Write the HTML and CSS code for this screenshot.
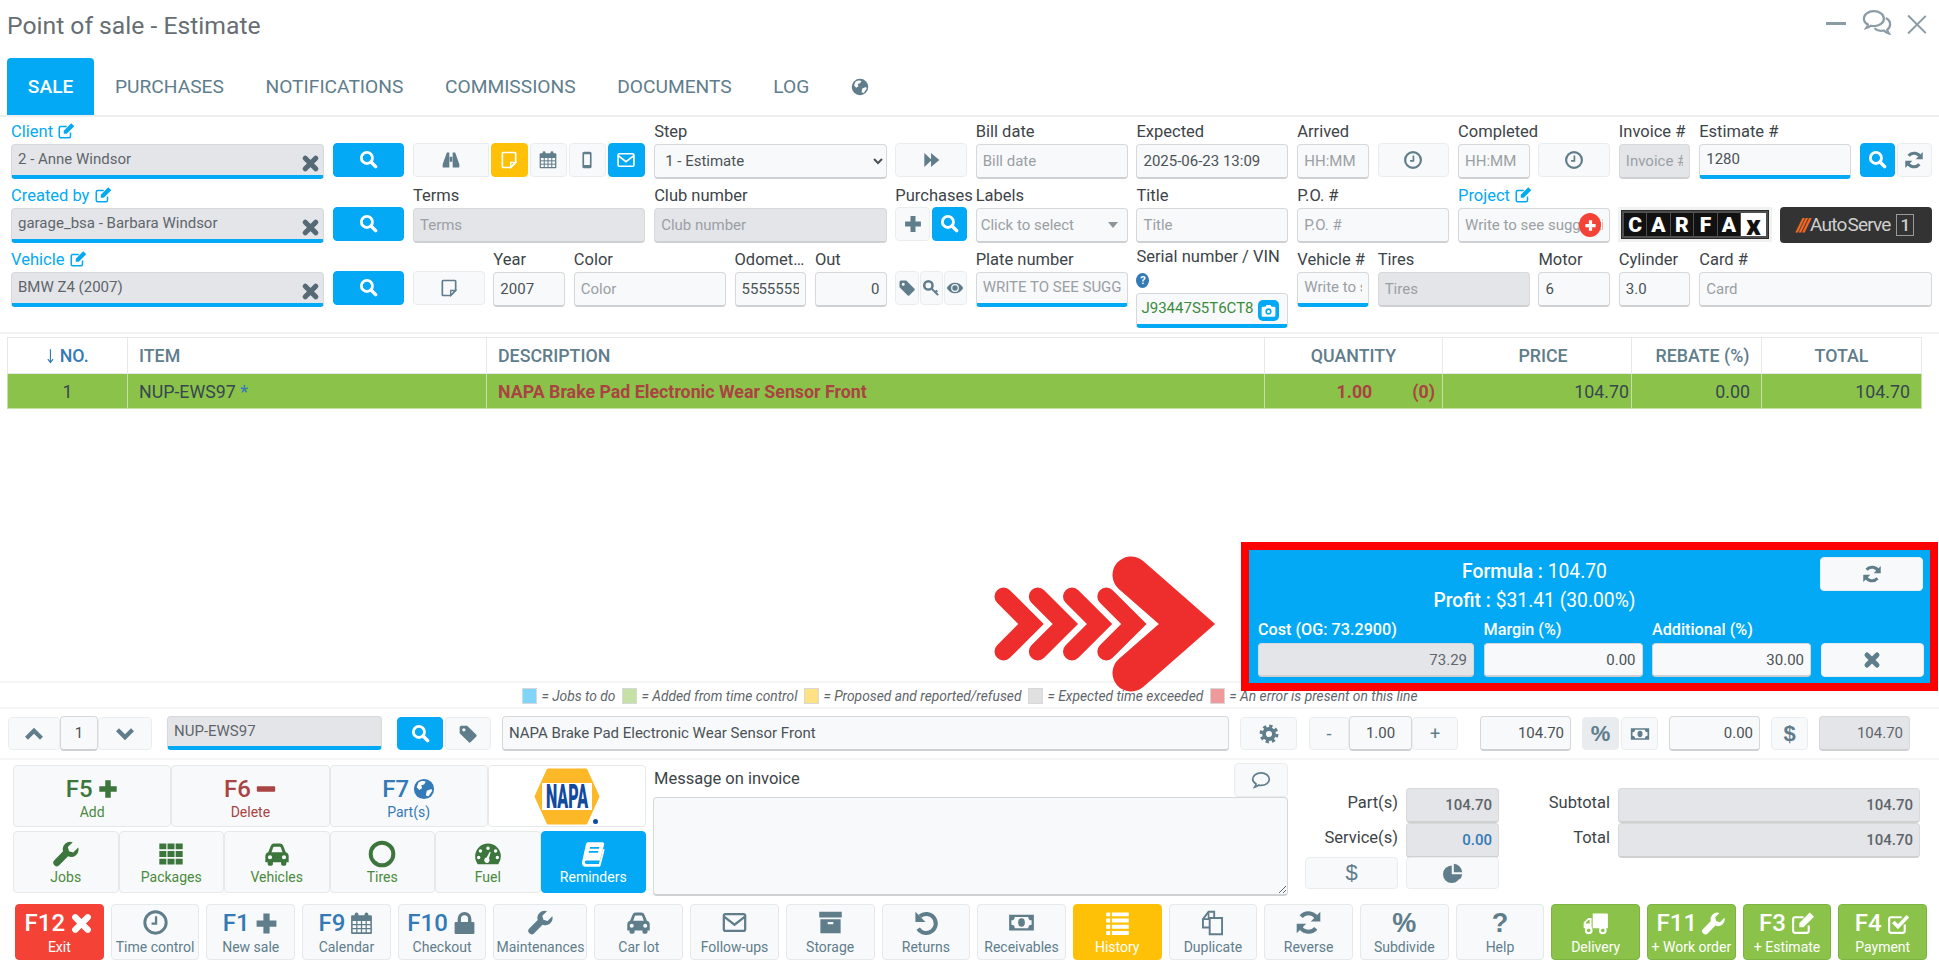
FILE: index.html
```html
<!doctype html>
<html lang="en">
<head>
  <meta charset="utf-8">
  <title>Point of sale - Estimate</title>
  <link rel="stylesheet" href="styles.css">
</head>
<body>
<svg class="sprite" xmlns="http://www.w3.org/2000/svg">
  <symbol id="search" viewBox="0 0 24 24"><circle cx="10" cy="10" r="7" fill="none" stroke="currentColor" stroke-width="3.6"/><path d="M15.5 15.5l5.5 5.5" fill="none" stroke="currentColor" stroke-width="4.4" stroke-linecap="round"/></symbol>
  <symbol id="times" viewBox="0 0 24 24"><path d="M6 6l12 12M18 6L6 18" fill="none" stroke="currentColor" stroke-width="6" stroke-linecap="round"/></symbol>
  <symbol id="edit" viewBox="0 0 24 24"><path d="M18 14v5a2 2 0 0 1-2 2H5a2 2 0 0 1-2-2V8a2 2 0 0 1 2-2h8" fill="none" stroke="currentColor" stroke-width="2"/><path d="M9 15.5v-4L19 1.5l4 4-10 10z"/></symbol>
  <symbol id="binoculars" viewBox="0 0 24 24"><path d="M10 3H7L2 17v3a1 1 0 0 0 1 1h7zM14 3h3l5 14v3a1 1 0 0 1-1 1h-7zM10.5 8h3v6h-3z"/></symbol>
  <symbol id="note" viewBox="0 0 24 24"><path d="M5 3h14a1 1 0 0 1 1 1v11l-6 6H5a1 1 0 0 1-1-1V4a1 1 0 0 1 1-1z" fill="none" stroke="currentColor" stroke-width="2"/><path d="M20 15h-6v6z" fill="none" stroke="currentColor" stroke-width="1.6"/></symbol>
  <symbol id="calendar" viewBox="0 0 24 24"><path fill-rule="evenodd" d="M3 4h18a1 1 0 0 1 1 1v16a1 1 0 0 1-1 1H3a1 1 0 0 1-1-1V5a1 1 0 0 1 1-1zM3.500 9.500v11h17v-11z"/><path d="M3 13h18M3 17h18M7.500 9v12M12 9v12M16.500 9v12" stroke="currentColor" stroke-width="1.200"/><rect x="5.500" y="1.500" width="3.500" height="6" rx="1.700"/><rect x="15" y="1.500" width="3.500" height="6" rx="1.700"/></symbol>
  <symbol id="mobile" viewBox="0 0 24 24"><path fill-rule="evenodd" d="M8.500 2h7a2 2 0 0 1 2 2v16a2 2 0 0 1-2 2h-7a2 2 0 0 1-2-2V4a2 2 0 0 1 2-2zM8.500 5v13h7V5z"/></symbol>
  <symbol id="envelope" viewBox="0 0 24 24"><rect x="2.500" y="4.500" width="19" height="15" rx="1.500" fill="none" stroke="currentColor" stroke-width="2"/><path d="M3 7l9 7 9-7" fill="none" stroke="currentColor" stroke-width="2"/></symbol>
  <symbol id="forward" viewBox="0 0 24 24"><path d="M4 3.500l8 7.500V3.500l10 8.500-10 8.500V13l-8 7.500z"/></symbol>
  <symbol id="clock" viewBox="0 0 24 24"><circle cx="12" cy="12" r="9.500" fill="none" stroke="currentColor" stroke-width="2.600"/><path d="M12.500 6.500v6.500H8.500" fill="none" stroke="currentColor" stroke-width="2"/></symbol>
  <symbol id="plus" viewBox="0 0 24 24"><path d="M9 2.500h6v6.500h6.500v6H15v6.500H9V15H2.500V9H9z"/></symbol>
  <symbol id="minus" viewBox="0 0 24 24"><rect x="2" y="9" width="20" height="6" rx="1"/></symbol>
  <symbol id="tag" viewBox="0 0 24 24"><path fill-rule="evenodd" d="M4 2h7l11 11a1.500 1.500 0 0 1 0 2l-7 7a1.500 1.500 0 0 1-2 0L2 11V4a2 2 0 0 1 2-2zM7 5a2 2 0 1 0 0 4 2 2 0 0 0 0-4z"/></symbol>
  <symbol id="key" viewBox="0 0 24 24"><circle cx="8.500" cy="8.500" r="5.500" fill="none" stroke="currentColor" stroke-width="3.400"/><path d="M12.500 12.500l9 9M17.500 17.500l3-2" fill="none" stroke="currentColor" stroke-width="2.800"/></symbol>
  <symbol id="eye" viewBox="0 0 24 24"><path fill-rule="evenodd" d="M1 12c2.500-4.500 6.500-7 11-7s8.500 2.500 11 7c-2.500 4.500-6.500 7-11 7S3.500 16.500 1 12zM12 6.800a5.200 5.200 0 1 0 0 10.400 5.200 5.200 0 0 0 0-10.400z"/><circle cx="12" cy="12" r="3.600"/></symbol>
  <symbol id="camera" viewBox="0 0 24 24"><path fill-rule="evenodd" d="M3 6h4l2-3h6l2 3h4a2 2 0 0 1 2 2v12a2 2 0 0 1-2 2H3a2 2 0 0 1-2-2V8a2 2 0 0 1 2-2zM12 8.500a5 5 0 1 0 0 10 5 5 0 0 0 0-10zM12 11a2.500 2.500 0 1 1 0 5 2.500 2.500 0 0 1 0-5z"/></symbol>
  <symbol id="refresh" viewBox="0 0 24 24"><path d="M20 9.500A8.500 8.500 0 0 0 5.500 6.800M4 14.500a8.500 8.500 0 0 0 14.500 2.700" fill="none" stroke="currentColor" stroke-width="3.600"/><path d="M22.500 2.500v8.500H14zM1.500 21.500V13H10z"/></symbol>
  <symbol id="globe" viewBox="0 0 24 24"><circle cx="12" cy="12" r="11"/><path d="M6 5c3-2 6-2 8-1l-2 3-3 1 1 3-3 2-3-3zM15 14l5-2 1 2-4 6-3-1z" fill="#fff"/></symbol>
  <symbol id="cog" viewBox="0 0 24 24"><circle cx="12" cy="12" r="6" fill="none" stroke="currentColor" stroke-width="4.600"/><circle cx="12" cy="12" r="9.500" fill="none" stroke="currentColor" stroke-width="3.600" stroke-dasharray="3.900 3.560"/></symbol>
  <symbol id="money" viewBox="0 0 24 24"><path fill-rule="evenodd" d="M1 5h22v14H1zM6 7a3 3 0 0 1-3 3v4a3 3 0 0 1 3 3h12a3 3 0 0 1 3-3v-4a3 3 0 0 1-3-3z"/><ellipse cx="12" cy="12" rx="3" ry="3.800"/></symbol>
  <symbol id="wrench" viewBox="0 0 24 24"><path d="M22.500 6.500l-4.300 4.200-3.600-1.100-1-3.600L17.800 2a6.300 6.300 0 0 0-8.300 7.700L2 17.300a3 3 0 0 0 4.400 4.200l7.400-7.600a6.300 6.300 0 0 0 8.700-7.400z"/></symbol>
  <symbol id="th" viewBox="0 0 24 24"><path d="M2 3h6v5H2zM9 3h6v5H9zM16 3h6v5h-6zM2 9.500h6v5H2zM9 9.500h6v5H9zM16 9.500h6v5h-6zM2 16h6v5H2zM9 16h6v5H9zM16 16h6v5h-6z"/></symbol>
  <symbol id="car" viewBox="0 0 24 24"><path fill-rule="evenodd" d="M4.500 10.500L6.700 5a3 3 0 0 1 2.800-2h5a3 3 0 0 1 2.800 2l2.200 5.500a3.500 3.500 0 0 1 2.500 3.300V19h-2v1.500a1.500 1.500 0 0 1-1.500 1.500h-1.500a1.500 1.500 0 0 1-1.500-1.500V19H8.500v1.500A1.500 1.500 0 0 1 7 22H5.500A1.500 1.500 0 0 1 4 20.500V19H2v-5.200a3.500 3.500 0 0 1 2.500-3.300zM7.300 10.500h9.400L15.300 6.400a1 1 0 0 0-.9-.6H9.600a1 1 0 0 0-.9.600zM6 13a1.800 1.800 0 1 0 0 3.600A1.800 1.800 0 0 0 6 13zM18 13a1.800 1.800 0 1 0 0 3.600 1.800 1.800 0 0 0 0-3.600z"/></symbol>
  <symbol id="ring" viewBox="0 0 24 24"><circle cx="12" cy="12" r="9.700" fill="none" stroke="currentColor" stroke-width="3.400"/></symbol>
  <symbol id="dashboard" viewBox="0 0 24 24"><path fill-rule="evenodd" d="M12 3A11 11 0 0 0 1 14c0 2.500.8 4.800 2.200 6.700h17.600A11 11 0 0 0 23 14 11 11 0 0 0 12 3zM12 5.500a1.500 1.500 0 1 1 0 3 1.500 1.500 0 0 1 0-3zM5.500 8a1.500 1.500 0 1 1 0 3 1.500 1.500 0 0 1 0-3zM18.500 8a1.500 1.500 0 1 1 0 3 1.500 1.500 0 0 1 0-3zM4 13.500a1.500 1.500 0 1 1 0 3 1.500 1.500 0 0 1 0-3zM20 13.500a1.500 1.500 0 1 1 0 3 1.500 1.500 0 0 1 0-3zM13.500 10l-2.700 5.100a2.300 2.300 0 1 0 2 .8l1.500-5.600z"/></symbol>
  <symbol id="book" viewBox="0 0 24 24"><path fill-rule="evenodd" d="M8 2h12a1.500 1.500 0 0 1 1.500 2L18 17.500H6.500a1.500 1.500 0 0 0-.2 3H17l3.500-13 1.500.8-3.500 13.500a1.500 1.500 0 0 1-1.400 1.200H5.500a3.500 3.500 0 0 1-3-3.500c0-.6.100-1 .3-1.500L6 3.500A2 2 0 0 1 8 2zM9.500 6l-.4 1.500h8l.4-1.500zM8.600 9.500l-.4 1.500h8l.4-1.500z"/></symbol>
  <symbol id="archive" viewBox="0 0 24 24"><path fill-rule="evenodd" d="M2 2.500h20v5H2zM3 9h18v12.500H3zM9.500 11.500v2h5v-2z"/></symbol>
  <symbol id="undo" viewBox="0 0 24 24"><path d="M7 6.500a8.500 8.500 0 1 1-1.500 11" fill="none" stroke="currentColor" stroke-width="3.600"/><path d="M3 2.500v9h9z"/></symbol>
  <symbol id="list" viewBox="0 0 24 24"><path d="M2 3h3.500v3.500H2zM7 3h15v3.500H7zM2 8.500h3.500V12H2zM7 8.500h15V12H7zM2 14h3.500v3.500H2zM7 14h15v3.500H7zM2 19.500h3.500V23H2zM7 19.500h15V23H7z"/></symbol>
  <symbol id="files" viewBox="0 0 24 24"><path d="M9.500 16.500H3.500V9l5-6.500h5v5" fill="none" stroke="currentColor" stroke-width="1.700"/><path d="M9.500 8h11v14.500h-11z" fill="none" stroke="currentColor" stroke-width="1.700"/><path d="M8.500 3v6H3.500" fill="none" stroke="currentColor" stroke-width="1.400"/></symbol>
  <symbol id="truck" viewBox="0 0 24 24"><path fill-rule="evenodd" d="M9.500 4H22a1 1 0 0 1 1 1v12H9.500zM8.500 8v9H1.500v-5l4-4zM6.800 9.700H5.700L3.500 12v.8h3.300z"/><circle cx="6" cy="19" r="2.500" fill="none" stroke="currentColor" stroke-width="1.800"/><circle cx="18.500" cy="19" r="2.500" fill="none" stroke="currentColor" stroke-width="1.800"/></symbol>
  <symbol id="check" viewBox="0 0 24 24"><path d="M18 13v6a2 2 0 0 1-2 2H5a2 2 0 0 1-2-2V8a2 2 0 0 1 2-2h10" fill="none" stroke="currentColor" stroke-width="2"/><path d="M7 10.500l4.500 4.500L21 5" fill="none" stroke="currentColor" stroke-width="3.400"/></symbol>
  <symbol id="lock" viewBox="0 0 24 24"><path d="M3.500 10.500h17a1 1 0 0 1 1 1V21a1 1 0 0 1-1 1h-17a1 1 0 0 1-1-1v-9.500a1 1 0 0 1 1-1z"/><path d="M7 11V7.500a5 5 0 0 1 10 0V11" fill="none" stroke="currentColor" stroke-width="3.200"/></symbol>
  <symbol id="comment" viewBox="0 0 24 24"><path d="M12 3.500c5.500 0 10 3.300 10 7.500s-4.500 7.500-10 7.500c-1 0-2-.1-3-.4-1.300 1.200-2.700 1.900-4.500 2.400 1-1.300 1.500-2.400 1.600-3.800C3.600 15 2 13.100 2 11c0-4.200 4.500-7.500 10-7.500z" fill="none" stroke="currentColor" stroke-width="2"/></symbol>
  <symbol id="comments" viewBox="0 0 24 24"><path d="M9.500 2.500c4.500 0 8 2.700 8 6s-3.500 6-8 6c-.9 0-1.700-.1-2.500-.3-1 .9-2.100 1.400-3.500 1.800.7-1 1.100-1.800 1.200-2.800C2.700 12 1.500 10.400 1.500 8.500c0-3.300 3.500-6 8-6z" fill="none" stroke="currentColor" stroke-width="1.800"/><path d="M19 8c2.200 1.100 3.500 2.900 3.500 5 0 1.700-.9 3.200-2.300 4.300.1 1 .6 2 1.300 3-1.600-.4-3-1.200-4-2.300-2.800.6-5.800-.1-7.500-1.800" fill="none" stroke="currentColor" stroke-width="1.800"/></symbol>
  <symbol id="pie" viewBox="0 0 24 24"><path d="M10.500 3v10.500H21A10.500 10.500 0 1 1 10.500 3zM13 1a10.500 10.500 0 0 1 10 10H13zM14 13.500h9a10.500 10.500 0 0 1-2.800 6.200z"/></symbol>
  <symbol id="up" viewBox="0 0 24 24"><path d="M3 17l9-9 9 9" fill="none" stroke="currentColor" stroke-width="5"/></symbol>
  <symbol id="down" viewBox="0 0 24 24"><path d="M3 7l9 9 9-9" fill="none" stroke="currentColor" stroke-width="5"/></symbol>
  <symbol id="sort" viewBox="0 0 12 24"><path d="M6 3v18M2.500 16.500L6 21l3.500-4.500" fill="none" stroke="currentColor" stroke-width="1.600"/></symbol>
</svg>

<div class="app">
  <header class="head">
    <h1 class="title">Point of sale - Estimate</h1>
    <div class="winbtns">
      <span class="win-min"></span>
      <svg class="ic win-chat"><use href="#comments"/></svg>
      <span class="win-x"></span>
    </div>
  </header>

  <nav class="tabs">
    <a class="tab active">SALE</a>
    <a class="tab">PURCHASES</a>
    <a class="tab">NOTIFICATIONS</a>
    <a class="tab">COMMISSIONS</a>
    <a class="tab">DOCUMENTS</a>
    <a class="tab">LOG</a>
    <a class="tab"><svg class="ic tab-globe"><use href="#globe"/></svg></a>
  </nav>

  <section class="form">
    <!-- row 1 -->
    <div class="f s4">
      <label class="lnk">Client <svg class="ic"><use href="#edit"/></svg></label>
      <div class="wrap"><input class="ctl disabled under" value="2 - Anne Windsor" readonly><svg class="ic clr"><use href="#times"/></svg></div>
    </div>
    <div class="f s1"><label></label><div class="b blue srch"><svg class="ic"><use href="#search"/></svg></div></div>
    <div class="f s3">
      <label></label>
      <div class="grp">
        <div class="b g-bino"><svg class="ic"><use href="#binoculars"/></svg></div>
        <div class="b orange g-sm"><svg class="ic"><use href="#note"/></svg></div>
        <div class="b g-sm"><svg class="ic"><use href="#calendar"/></svg></div>
        <div class="b g-sm"><svg class="ic"><use href="#mobile"/></svg></div>
        <div class="b blue g-sm"><svg class="ic"><use href="#envelope"/></svg></div>
      </div>
    </div>
    <div class="f s3">
      <label>Step</label>
      <select class="ctl"><option>1 - Estimate</option></select>
    </div>
    <div class="f s1"><label></label><div class="b"><svg class="ic"><use href="#forward"/></svg></div></div>
    <div class="f s2"><label>Bill date</label><input class="ctl" placeholder="Bill date"></div>
    <div class="f s2"><label>Expected</label><input class="ctl" value="2025-06-23 13:09"></div>
    <div class="f s1"><label>Arrived</label><input class="ctl" placeholder="HH:MM"></div>
    <div class="f s1"><label></label><div class="b"><svg class="ic"><use href="#clock"/></svg></div></div>
    <div class="f s1"><label>Completed</label><input class="ctl" placeholder="HH:MM"></div>
    <div class="f s1"><label></label><div class="b"><svg class="ic"><use href="#clock"/></svg></div></div>
    <div class="f s1"><label>Invoice #</label><input class="ctl disabled" placeholder="Invoice #"></div>
    <div class="f s2"><label>Estimate #</label><input class="ctl under" value="1280"></div>
    <div class="f s1">
      <label></label>
      <div class="grp pair"><div class="b blue srch"><svg class="ic"><use href="#search"/></svg></div><div class="b"><svg class="ic"><use href="#refresh"/></svg></div></div>
    </div>

    <!-- row 2 -->
    <div class="f s4">
      <label class="lnk">Created by <svg class="ic"><use href="#edit"/></svg></label>
      <div class="wrap"><input class="ctl disabled under" value="garage_bsa - Barbara Windsor" readonly><svg class="ic clr"><use href="#times"/></svg></div>
    </div>
    <div class="f s1"><label></label><div class="b blue srch"><svg class="ic"><use href="#search"/></svg></div></div>
    <div class="f s3"><label>Terms</label><input class="ctl disabled" placeholder="Terms"></div>
    <div class="f s3"><label>Club number</label><input class="ctl disabled" placeholder="Club number"></div>
    <div class="f s1">
      <label class="over">Purchases</label>
      <div class="grp pair"><div class="b"><svg class="ic"><use href="#plus"/></svg></div><div class="b blue srch"><svg class="ic"><use href="#search"/></svg></div></div>
    </div>
    <div class="f s2">
      <label>Labels</label>
      <div class="ctl fake"><span>Click to select</span><i class="caret"></i></div>
    </div>
    <div class="f s2"><label>Title</label><input class="ctl" placeholder="Title"></div>
    <div class="f s2"><label>P.O. #</label><input class="ctl" placeholder="P.O. #"></div>
    <div class="f s2">
      <label class="lnk">Project <svg class="ic"><use href="#edit"/></svg></label>
      <div class="wrap"><input class="ctl" placeholder="Write to see suggestions"><span class="addbadge"><svg class="ic"><use href="#plus"/></svg></span></div>
    </div>
    <div class="f s2">
      <label></label>
      <div class="carfax">
        <span>C</span><span>A</span><span>R</span><span>F</span><span>A</span><span class="cx">x</span>
      </div>
    </div>
    <div class="f s2">
      <label></label>
      <div class="autoserve"><b>///</b>Auto Serve<em>1</em></div>
    </div>

    <!-- row 3 -->
    <div class="f s4">
      <label class="lnk">Vehicle <svg class="ic"><use href="#edit"/></svg></label>
      <div class="wrap"><input class="ctl disabled under" value="BMW Z4 (2007)" readonly><svg class="ic clr"><use href="#times"/></svg></div>
    </div>
    <div class="f s1"><label></label><div class="b blue srch"><svg class="ic"><use href="#search"/></svg></div></div>
    <div class="f s1"><label></label><div class="b"><svg class="ic"><use href="#note"/></svg></div></div>
    <div class="f s1"><label>Year</label><input class="ctl" value="2007"></div>
    <div class="f s2"><label>Color</label><input class="ctl" placeholder="Color"></div>
    <div class="f s1"><label class="clip">Odometer</label><input class="ctl" value="5555555"></div>
    <div class="f s1"><label>Out</label><input class="ctl right" value="0"></div>
    <div class="f s1">
      <label></label>
      <div class="grp trio">
        <div class="b"><svg class="ic"><use href="#tag"/></svg></div>
        <div class="b"><svg class="ic"><use href="#key"/></svg></div>
        <div class="b"><svg class="ic"><use href="#eye"/></svg></div>
      </div>
    </div>
    <div class="f s2"><label>Plate number</label><input class="ctl under" placeholder="WRITE TO SEE SUGGESTIONS"></div>
    <div class="f s2 vin">
      <label>Serial number / VIN</label>
      <span class="help">?</span>
      <div class="wrap"><input class="ctl under vin-in" value="J93447S5T6CT8"><span class="cam"><svg class="ic"><use href="#camera"/></svg></span></div>
    </div>
    <div class="f s1"><label>Vehicle #</label><input class="ctl under" placeholder="Write to see suggestions"></div>
    <div class="f s2"><label>Tires</label><input class="ctl disabled" placeholder="Tires"></div>
    <div class="f s1"><label>Motor</label><input class="ctl" value="6"></div>
    <div class="f s1"><label>Cylinder</label><input class="ctl" value="3.0"></div>
    <div class="f s3"><label>Card #</label><input class="ctl" placeholder="Card"></div>
  </section>

  <table class="items">
    <colgroup>
      <col class="c-no"><col class="c-item"><col class="c-desc"><col class="c-qty"><col class="c-price"><col class="c-reb"><col class="c-tot">
    </colgroup>
    <thead>
      <tr>
        <th class="ctr sorted"><svg class="ic sort"><use href="#sort"/></svg> NO.</th>
        <th>ITEM</th>
        <th>DESCRIPTION</th>
        <th class="ctr">QUANTITY</th>
        <th class="ctr nudge">PRICE</th>
        <th class="ctr nudge">REBATE (%)</th>
        <th class="ctr">TOTAL</th>
      </tr>
    </thead>
    <tbody>
      <tr>
        <td class="ctr">1</td>
        <td>NUP-EWS97 <span class="star">*</span></td>
        <td class="bad">NAPA Brake Pad Electronic Wear Sensor Front</td>
        <td class="bad num">1.00<span class="bo">(0)</span></td>
        <td class="num price">104.70</td>
        <td class="num">0.00</td>
        <td class="num">104.70</td>
      </tr>
    </tbody>
  </table>

  <div class="spacer"></div>

  <div class="legend">
    <i class="sw sw-blue"></i><span>= Jobs to do</span>
    <i class="sw sw-green"></i><span>= Added from time control</span>
    <i class="sw sw-yellow"></i><span>= Proposed and reported/refused</span>
    <i class="sw sw-grey"></i><span>= Expected time exceeded</span>
    <i class="sw sw-red"></i><span>= An error is present on this line</span>
  </div>

  <div class="itemrow">
    <div class="seg nav">
      <div class="b"><svg class="ic"><use href="#up"/></svg></div>
      <input class="ctl mid" value="1">
      <div class="b"><svg class="ic"><use href="#down"/></svg></div>
    </div>
    <input class="ctl disabled under i-code" value="NUP-EWS97" readonly>
    <div class="seg tools">
      <div class="b blue srch"><svg class="ic"><use href="#search"/></svg></div>
      <div class="b"><svg class="ic"><use href="#tag"/></svg></div>
    </div>
    <input class="ctl i-desc" value="NAPA Brake Pad Electronic Wear Sensor Front">
    <div class="b i-gear"><svg class="ic"><use href="#cog"/></svg></div>
    <div class="seg qty">
      <div class="b qbtn">-</div>
      <input class="ctl mid" value="1.00">
      <div class="b qbtn">+</div>
    </div>
    <input class="ctl right i-amt i-first" value="104.70">
    <div class="seg duo">
      <div class="b on sym">%</div>
      <div class="b"><svg class="ic"><use href="#money"/></svg></div>
    </div>
    <input class="ctl right i-amt" value="0.00">
    <div class="b i-sym sym">$</div>
    <input class="ctl right disabled i-amt" value="104.70" readonly>
  </div>

  <section class="panels">
    <div class="actions">
      <div class="act s3a c-green"><div class="k">F5 <svg class="ic"><use href="#plus"/></svg></div><span>Add</span></div>
      <div class="act s3a c-red"><div class="k">F6 <svg class="ic"><use href="#minus"/></svg></div><span>Delete</span></div>
      <div class="act s3a c-blue"><div class="k">F7 <svg class="ic"><use href="#globe"/></svg></div><span>Part(s)</span></div>
      <div class="act s3a logo">
        <svg class="napa" viewBox="0 0 66 57">
          <polygon points="14,2 52,2 64,28.500 52,55 14,55 2,28.500" fill="#fdb827" stroke="#fdb827" stroke-width="3" stroke-linejoin="round"/>
          <rect x="8" y="15" width="50" height="27" fill="#fff"/>
          <text transform="translate(33 40) scale(0.8 1.650)" text-anchor="middle" font-size="20" font-weight="900" fill="#114a9f">NAPA</text>
        </svg>
        <i class="reg"></i>
      </div>
      <div class="act s2a c-green"><svg class="ic"><use href="#wrench"/></svg><span>Jobs</span></div>
      <div class="act s2a c-green"><svg class="ic"><use href="#th"/></svg><span>Packages</span></div>
      <div class="act s2a c-green"><svg class="ic"><use href="#car"/></svg><span>Vehicles</span></div>
      <div class="act s2a c-green"><svg class="ic"><use href="#ring"/></svg><span>Tires</span></div>
      <div class="act s2a c-green"><svg class="ic"><use href="#dashboard"/></svg><span>Fuel</span></div>
      <div class="act s2a sel"><svg class="ic"><use href="#book"/></svg><span>Reminders</span></div>
    </div>

    <div class="msg">
      <div class="msg-head">
        <label>Message on invoice</label>
        <div class="b msg-btn"><svg class="ic"><use href="#comment"/></svg></div>
      </div>
      <textarea class="ctl msg-area"></textarea>
    </div>

    <div class="totals">
      <label>Part(s)</label><input class="ctl right disabled strong" value="104.70" readonly>
      <label>Subtotal</label><input class="ctl right disabled strong" value="104.70" readonly>
      <label>Service(s)</label><input class="ctl right disabled strong link-num" value="0.00" readonly>
      <label>Total</label><input class="ctl right disabled strong" value="104.70" readonly>
      <div class="b sym thin">$</div>
      <div class="b"><svg class="ic"><use href="#pie"/></svg></div>
    </div>
  </section>

  <footer class="bar">
    <div class="fb red"><div class="k">F12 <svg class="ic"><use href="#times"/></svg></div><span>Exit</span></div>
    <div class="fb"><svg class="ic"><use href="#clock"/></svg><span>Time control</span></div>
    <div class="fb"><div class="k c-blue">F1 <svg class="ic slate"><use href="#plus"/></svg></div><span>New sale</span></div>
    <div class="fb"><div class="k c-blue">F9 <svg class="ic slate"><use href="#calendar"/></svg></div><span>Calendar</span></div>
    <div class="fb"><div class="k c-blue">F10 <svg class="ic slate"><use href="#lock"/></svg></div><span>Checkout</span></div>
    <div class="fb wide"><svg class="ic"><use href="#wrench"/></svg><span>Maintenances</span></div>
    <div class="fb"><svg class="ic"><use href="#car"/></svg><span>Car lot</span></div>
    <div class="fb"><svg class="ic"><use href="#envelope"/></svg><span>Follow-ups</span></div>
    <div class="fb"><svg class="ic"><use href="#archive"/></svg><span>Storage</span></div>
    <div class="fb"><svg class="ic"><use href="#undo"/></svg><span>Returns</span></div>
    <div class="fb"><svg class="ic"><use href="#money"/></svg><span>Receivables</span></div>
    <div class="fb orange"><svg class="ic"><use href="#list"/></svg><span>History</span></div>
    <div class="fb"><svg class="ic"><use href="#files"/></svg><span>Duplicate</span></div>
    <div class="fb"><svg class="ic"><use href="#refresh"/></svg><span>Reverse</span></div>
    <div class="fb"><div class="glyph">%</div><span>Subdivide</span></div>
    <div class="fb"><div class="glyph">?</div><span>Help</span></div>
    <div class="fb ok"><svg class="ic"><use href="#truck"/></svg><span>Delivery</span></div>
    <div class="fb ok"><div class="k">F11 <svg class="ic"><use href="#wrench"/></svg></div><span>+ Work order</span></div>
    <div class="fb ok"><div class="k">F3 <svg class="ic"><use href="#edit"/></svg></div><span>+ Estimate</span></div>
    <div class="fb ok"><div class="k">F4 <svg class="ic"><use href="#check"/></svg></div><span>Payment</span></div>
  </footer>

  <!-- callout drawn over the screen -->
  <svg class="arrows" viewBox="0 0 240 150">
    <g fill="none" stroke="#ee2d2d" stroke-linecap="round" stroke-linejoin="miter" stroke-miterlimit="10">
      <path stroke-width="18" d="M14.500 50.500L42 78 14.500 105.500"/>
      <path stroke-width="18" d="M48.800 50.500L76.300 78 48.800 105.500"/>
      <path stroke-width="18" d="M83 50.500L110.500 78 83 105.500"/>
      <path stroke-width="18" d="M117.300 50.500L144.800 78 117.300 105.500"/>
      <path stroke-width="37" d="M142 29L198 78 142 127"/>
    </g>
  </svg>

  <div class="callout">
    <div class="call-top">
      <div class="call-text">
        <div><b>Formula :</b> 104.70</div>
        <div><b>Profit :</b> $31.41 (30.00%)</div>
      </div>
      <div class="b call-btn"><svg class="ic"><use href="#refresh"/></svg></div>
    </div>
    <div class="call-grid">
      <label>Cost (OG: 73.2900)</label><label>Margin (%)</label><label>Additional (%)</label><span></span>
      <input class="ctl right disabled" value="73.29" readonly>
      <input class="ctl right" value="0.00">
      <input class="ctl right" value="30.00">
      <div class="b call-btn"><svg class="ic"><use href="#times"/></svg></div>
    </div>
  </div>
</div>
</body>
</html>
```

FILE: styles.css
```css
* { box-sizing: border-box; }
html, body { margin: 0; height: 100%; background: #fff; }
body {
  font-family: Roboto, "Liberation Sans", sans-serif;
  font-size: 16.500px;
  color: #37474f;
  overflow: hidden;
}
.sprite { position: absolute; width: 0; height: 0; }
.ic { width: 1em; height: 1em; fill: currentColor; flex: none; }

.app {
  position: relative;
  height: 965px;
  display: flex;
  flex-direction: column;
}

/* header */
.head {
  height: 58px;
  display: flex;
  justify-content: space-between;
  padding: 9px 12px 0 7px;
}
.title {
  margin: 0;
  font-size: 24.700px;
  line-height: 34px;
  font-weight: 400;
  color: #666e73;
}
.winbtns { display: flex; align-items: flex-start; color: #8b9ca6; }
.win-min { width: 20px; height: 2.500px; background: #8b9ca6; margin-top: 13px; margin-right: 16px; }
.win-chat { font-size: 30px; margin-top: -1px; margin-right: 15px; }
.win-x { width: 20px; height: 18px; margin-top: 6px; position: relative; }
.win-x::before, .win-x::after {
  content: "";
  position: absolute;
  left: 9px;
  top: -3px;
  width: 1.500px;
  height: 25px;
  background: #8b9ca6;
  transform: rotate(45deg);
}
.win-x::after { transform: rotate(-45deg); }

/* tabs */
.tabs {
  height: 59px;
  display: flex;
  padding-left: 7px;
  border-bottom: 2px solid #eceeef;
}
.tab {
  display: flex;
  align-items: center;
  padding: 0 20.800px;
  font-size: 19.200px;
  color: #607d8b;
}
.tab.active {
  color: #fff;
  font-weight: 500;
  background: #03a9f4;
  border-radius: 4px 4px 0 0;
}
.tab-globe { font-size: 18px; }

/* form grid */
.form {
  display: grid;
  grid-template-columns: repeat(24, 71.600px);
  column-gap: 8.800px;
  row-gap: 6px;
  padding: 4px 0 4px 11px;
  height: 217px;
  border-bottom: 2px solid #f0f1f2;
  align-content: start;
  grid-template-rows: 58px 58px 80px;
}
.f { display: flex; flex-direction: column; min-width: 0; }
.s1 { grid-column: span 1; }
.s2 { grid-column: span 2; }
.s3 { grid-column: span 3; }
.s4 { grid-column: span 4; }
.f label {
  height: 23px;
  line-height: 21px;
  white-space: nowrap;
  color: #3d4448;
}
.f label .ic { font-size: 18px; vertical-align: -3px; }
.f label.lnk { color: #03a9f4; }
.f label.clip { overflow: hidden; text-overflow: ellipsis; }
.f label.over { overflow: visible; }
.vin { margin-top: -3px; }
.vin label { height: 21px; line-height: 21px; }
.help {
  width: 13px;
  height: 15px;
  margin-top: 6px;
  margin-bottom: 5px;
  border-radius: 50%;
  background: #337ab7;
  color: #fff;
  font-size: 11px;
  font-weight: 700;
  line-height: 15px;
  text-align: center;
}

/* controls */
.ctl {
  width: 100%;
  height: 35px;
  padding: 0 6px;
  font: 15px Roboto, "Liberation Sans", sans-serif;
  color: #4a5257;
  background: #f8f9fa;
  border: 1px solid #d6d8da;
  border-bottom: 2px solid #ced0d2;
  border-radius: 4px;
  outline: 0;
}
.ctl::placeholder { color: #9aa0a4; opacity: 1; }
.ctl.disabled { background: #e4e5e9; color: #5f666b; }
.ctl.under { border-bottom: 4px solid #03a9f4; padding-bottom: 2px; }
.ctl.right { text-align: right; }
.ctl.strong { font-weight: 500; color: #5d6468; }
.ctl.link-num { color: #337ab7; }
select.ctl { padding-left: 6px; }
.fake {
  display: flex;
  align-items: center;
  justify-content: space-between;
  color: #9aa0a4;
  padding: 0 9px 0 4px;
}
.caret {
  width: 0;
  height: 0;
  border: 5px solid transparent;
  border-top: 6px solid #8b949a;
  border-bottom: 0;
}
.wrap { position: relative; }
.clr {
  position: absolute;
  right: 3px;
  top: 9px;
  font-size: 21px;
  color: #566a75;
}
.addbadge {
  position: absolute;
  right: 9px;
  top: 5px;
  width: 22px;
  height: 24px;
  border-radius: 50%;
  background: #f44336;
  color: #fff;
  display: flex;
  align-items: center;
  justify-content: center;
  font-size: 13px;
}
.vin-in { color: #3c8a3c; padding-left: 4px; padding-right: 32px; }
.cam {
  position: absolute;
  right: 9px;
  top: 7px;
  width: 21px;
  height: 21px;
  border-radius: 5px;
  background: #03a9f4;
  color: #fff;
  display: flex;
  align-items: center;
  justify-content: center;
  font-size: 15px;
}

/* buttons */
.b {
  display: flex;
  align-items: center;
  justify-content: center;
  height: 33.500px;
  margin-top: -1px;
  background: #f8f9fa;
  border: 1px solid #eaedee;
  border-radius: 4px;
  color: #607d8b;
  font-size: 20px;
}
.b.blue { background: #03a9f4; border-color: #03a9f4; color: #fff; }
.b.orange { background: #ffc107; border-color: #ffc107; color: #fff; }
.b.srch { font-size: 19px; }
.grp { display: flex; gap: 2px; margin-top: 0; }
.g-bino { width: 76px; border-radius: 4px 0 0 4px; }
.g-sm { width: 37px; }
.pair .b { flex: 1; }
.trio { gap: 1px; }
.trio .b { flex: 1; font-size: 18px; }

/* logos */
.carfax {
  height: 29px;
  margin-top: 2px;
  margin-left: 2px;
  margin-right: 2px;
  padding: 2px;
  display: flex;
  gap: 1px;
  background: #4f4f4f;
  border: 1px solid #2b2b2b;
  outline: 3px solid #f0f1f1;
}
.carfax span {
  flex: 1;
  display: flex;
  align-items: center;
  justify-content: center;
  background: #111;
  color: #fff;
  font-size: 21px;
  font-weight: 900;
}
.carfax .cx {
  background: #fff;
  color: #111;
  align-items: flex-end;
  font-size: 28px;
  line-height: 20px;
  flex: 1.100;
}
.autoserve {
  height: 37px;
  margin-top: -1px;
  border-radius: 4px;
  background: #333;
  color: #cfcfcf;
  display: flex;
  align-items: center;
  justify-content: center;
  font-size: 19px;
  letter-spacing: -0.800px;
  word-spacing: -3px;
}
.autoserve b { color: #f26a21; font-style: italic; font-weight: 900; margin-right: 1px; }
.autoserve em {
  font-style: normal;
  font-weight: 500;
  font-size: 17px;
  margin-left: 5px;
  padding: 0 4px;
  border: 1px solid #999;
  line-height: 20px;
}

/* table */
.items {
  margin: 3px 0 0 7px;
  width: 1914px;
  border-collapse: collapse;
  table-layout: fixed;
  font-size: 17.800px;
}
.c-no { width: 120px; }
.c-item { width: 359px; }
.c-desc { width: 778px; }
.c-qty { width: 178px; }
.c-price { width: 189px; }
.c-reb { width: 130px; }
.c-tot { width: 160px; }
.items th, .items td {
  padding: 0 11px;
  text-align: left;
  border: 1px solid #e6e8e9;
  white-space: nowrap;
}
.items th {
  height: 36px;
  font-weight: 500;
  color: #607d8b;
}
.items td {
  height: 35px;
  background: #8bc34a;
  border-color: #c5e1a5;
  color: #37474f;
}
.items .ctr { text-align: center; }
.items th.nudge { padding-left: 21px; padding-right: 9px; }
.items .num { text-align: right; }
.items td.price { padding-right: 2px; }
.items .bad { color: #a94442; font-weight: 700; }
.items th.sorted { color: #337ab7; }
.sort { width: 0.5em; vertical-align: -3px; }
.star { color: #337ab7; font-weight: 500; }
.bo { margin-left: 40px; margin-right: -4px; }

.spacer { flex: 1; }

/* legend */
.legend {
  height: 28px;
  display: flex;
  align-items: center;
  justify-content: center;
  gap: 4px;
  padding: 2px 0 0 4px;
  border-top: 2px solid #f4f5f5;
  border-bottom: 2px solid #f4f5f5;
  font-size: 13.800px;
  font-style: italic;
  color: #5f666b;
}
.legend span { margin-right: 3px; }
.sw { width: 15px; height: 16px; border: 1px solid #d6d8da; }
.sw-blue { background: #81d4fa; }
.sw-green { background: #c5e1a5; }
.sw-yellow { background: #ffe082; }
.sw-grey { background: #e0e0e0; }
.sw-red { background: #ef9a9a; }

/* current line */
.itemrow {
  display: flex;
  align-items: flex-start;
  gap: 11px;
  height: 44px;
  margin-top: 7px;
  padding: 0 29px 0 8px;
  border-bottom: 2px solid #f4f5f5;
}
.itemrow .b { margin-top: 1px; height: 33px; }
.seg { display: flex; flex: none; }
.nav { width: 144px; margin-right: 4px; }
.nav .b:first-child { width: 52px; }
.nav .b:last-child { width: 54px; }
.nav .mid { width: 38px; text-align: center; padding: 0; }
.i-code { width: 215px; flex: none; margin-right: 4px; height: 34px; }
.tools { width: 94px; gap: 2px; }
.tools .b { flex: 1; }
.i-desc { flex: 1; min-width: 0; }
.i-gear { width: 57px; flex: none; }
.qty { width: 149px; margin-left: 1px; margin-right: 11px; }
.qbtn { font-size: 18px; }
.qty .qbtn:first-child { width: 40px; }
.qty .qbtn:last-child { width: 46px; }
.qty .mid { width: 63px; text-align: center; padding: 0; }
.i-amt { width: 91px; flex: none; }
.duo { width: 76px; gap: 2px; }
.duo .b { flex: 1; }
.b.on { background: #e9ecef; }
.sym { font-weight: 700; font-size: 22px; font-family: "Liberation Sans", sans-serif; }
.i-sym { width: 37px; flex: none; }

/* panels */
.panels {
  display: flex;
  margin-top: 5px;
  padding-left: 13px;
  height: 131px;
  flex: none;
}
.actions {
  width: 633px;
  flex: none;
  display: grid;
  grid-template-columns: repeat(12, 1fr);
  grid-template-rows: 62px 62px;
  row-gap: 4px;
  align-content: start;
}
.act {
  display: flex;
  flex-direction: column;
  align-items: center;
  justify-content: center;
  padding-top: 1px;
  background: #f8f9fa;
  border: 1px solid #e6e9ea;
  border-radius: 4px;
  font-size: 14px;
}
.s3a { grid-column: span 3; }
.s2a { grid-column: span 2; }
.k {
  display: flex;
  align-items: center;
  gap: 4px;
  font-size: 24px;
  line-height: 30px;
  font-weight: 500;
}
.k .ic { font-size: 22px; }
.act > .ic { font-size: 28px; margin-bottom: 1px; }
.c-green { color: #3c763d; }
.c-red { color: #a94442; }
.c-blue { color: #337ab7; }
.act.c-green span { color: #4a8a3c; }
.act.sel { background: #03a9f4; border-color: #03a9f4; color: #fff; }
.logo { position: relative; background: #fff; }
.napa { width: 66px; height: 57px; font-family: Roboto, "Liberation Sans", sans-serif; }
.reg {
  position: absolute;
  right: 47px;
  bottom: 2px;
  width: 5px;
  height: 5px;
  border-radius: 50%;
  background: #114a9f;
}
.msg { width: 635px; margin-left: 7px; flex: none; }
.msg-head { display: flex; justify-content: space-between; height: 32px; }
.msg-head label { line-height: 28px; margin-left: 1px; color: #3d4448; }
.msg-btn { width: 54px; margin-top: -2px; font-size: 20px; }
.msg-area { display: block; height: 99px; resize: both; }
.totals {
  margin-left: 17px;
  padding-top: 23px;
  display: grid;
  grid-template-columns: 93px 93px 103px 302px;
  grid-template-rows: 34.500px 34.500px 33px;
  column-gap: 8px;
  align-content: start;
}
.totals label { text-align: right; line-height: 30px; color: #3d4448; }
.totals .b { margin-top: 0; height: 32px; }
.thin { font-weight: 400; }

/* bottom bar */
.bar {
  display: flex;
  gap: 7px;
  margin-top: 8px;
  padding: 0 12px 0 15px;
  height: 56px;
  flex: none;
  margin-bottom: 5px;
}
.fb {
  flex: 1 1 0;
  min-width: 0;
  display: flex;
  flex-direction: column;
  align-items: center;
  justify-content: flex-end;
  background: #f8f9fa;
  border: 1px solid #e6e9ea;
  border-radius: 4px;
  color: #607d8b;
  font-size: 14px;
  line-height: 19px;
  padding-bottom: 2px;
  white-space: nowrap;
}
.fb.wide { flex: 0 0 94px; }
.fb > .ic { font-size: 27px; margin-bottom: 2px; }
.fb .k { line-height: 29px; }
.fb .k .ic { font-size: 25px; }
.slate { color: #607d8b; }
.fb.red { background: #f44336; border-color: #f44336; color: #fff; }
.fb.orange { background: #ffc107; border-color: #ffc107; color: #fff; }
.fb.ok { background: #8bc34a; border-color: #7cb342; color: #fff; }
.glyph { font: 700 27px/29px "Liberation Sans", sans-serif; }

/* callout over the bottom right of the table area */
.arrows {
  position: absolute;
  left: 989px;
  top: 546px;
  width: 240px;
  height: 150px;
}
.callout {
  position: absolute;
  left: 1241px;
  top: 542px;
  width: 697px;
  height: 149px;
  padding: 7px 7px 0 9px;
  background: #03a9f4;
  border: 8px solid #f00;
  color: #fff;
}
.call-top {
  display: grid;
  grid-template-columns: 553px 103px;
  column-gap: 9px;
  height: 58px;
  margin-bottom: 4px;
}
.call-text { text-align: center; font-size: 19.300px; line-height: 29px; }
.call-text b { font-weight: 500; }
.call-btn { margin-top: 0; height: 34px; }
.call-grid {
  display: grid;
  grid-template-columns: 216px 159px 159px 103px;
  grid-template-rows: 24px 34px;
  column-gap: 9.500px;
}
.call-grid label { font-size: 16.200px; font-weight: 500; line-height: 22px; }
.call-grid .ctl { height: 34px; }
```
